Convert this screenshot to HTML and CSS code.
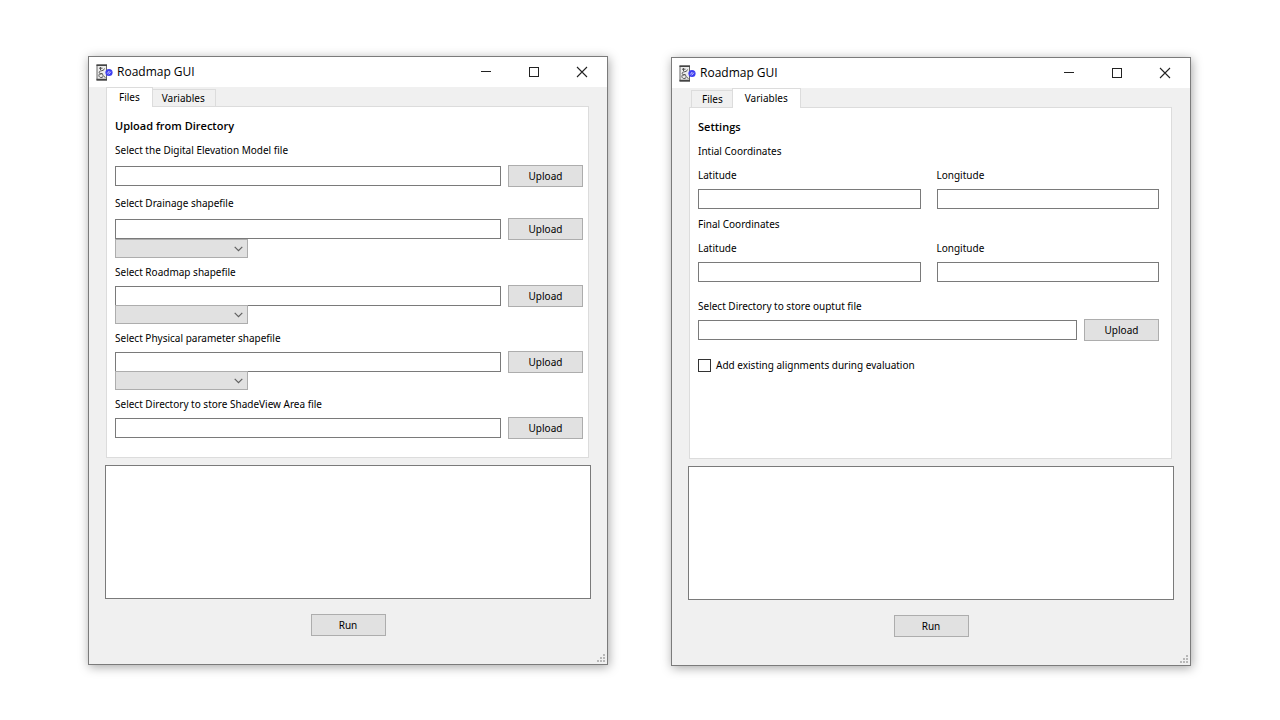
FILE: index.html
```html
<!DOCTYPE html>
<html lang="en">
<head>
<meta charset="utf-8">
<title>Roadmap GUI</title>
<link rel="stylesheet" href="styles.css">
</head>
<body>
<svg class="sprite" aria-hidden="true">
  <symbol id="app" viewBox="0 0 17 17">
    <rect x="1" y="1" width="9.5" height="15" fill="#ececec" stroke="#666" stroke-width="1"/>
    <path d="M0.5 1.2h10.5M0.5 15.6h10.5" stroke="#444" stroke-width="1.6" fill="none"/>
    <path d="M3 4.2h3.5M4.5 3v3M8.5 4.5c-.5 2-2 2-4 2.5s-1.800 2.500.5 2.500h1.500M4 9.500c-2 1.500-1 4 1 4s2.500-1 2-2.500-2-1.500-3-.5M8 12.500l1.500 1" stroke="#555" stroke-width="1" fill="none"/>
    <circle cx="13" cy="8.500" r="3.600" fill="#3d3df0"/>
    <path d="M11.300 9.500l2-2.500M12.600 10.300l2.200-2.600" stroke="#d5d5ff" stroke-width="1" fill="none"/>
  </symbol>
  <symbol id="min" viewBox="0 0 12 12"><path d="M1 5.500h10" stroke="#222" fill="none"/></symbol>
  <symbol id="max" viewBox="0 0 12 12"><rect x="1.500" y="1.500" width="9" height="9" stroke="#222" fill="none"/></symbol>
  <symbol id="close" viewBox="0 0 12 12"><path d="M1 1l10 10M11 1L1 11" stroke="#222" stroke-width="1.100" fill="none"/></symbol>
  <symbol id="chevron" viewBox="0 0 9 6"><path d="M.700 .800l3.800 3.800L8.300 .800" stroke="#606060" stroke-width="1.200" fill="none"/></symbol>
  <symbol id="grip" viewBox="0 0 9 9"><path d="M6 0h2v2h-2zM3 3h2v2h-2zM6 3h2v2h-2zM0 6h2v2h-2zM3 6h2v2h-2zM6 6h2v2h-2z" fill="#b8b8b8"/></symbol>
</svg>
<main class="desktop">
  <section class="window" aria-label="Roadmap GUI, Files">
    <header class="titlebar">
      <svg class="app-icon"><use href="#app"/></svg>
      <h1 class="title">Roadmap GUI</h1>
      <button class="control" aria-label="Minimize"><svg><use href="#min"/></svg></button>
      <button class="control" aria-label="Maximize"><svg><use href="#max"/></svg></button>
      <button class="control" aria-label="Close"><svg><use href="#close"/></svg></button>
    </header>
    <div class="body">
      <div class="tabs" role="tablist">
        <button class="tab selected" role="tab" aria-selected="true">Files</button>
        <button class="tab" role="tab" aria-selected="false">Variables</button>
      </div>
      <div class="panel" role="tabpanel">
        <h2 class="heading">Upload from Directory</h2>
        <div class="group">
          <label class="label" for="dem">Select the Digital Elevation Model file</label>
          <div class="row"><input class="field" type="text" id="dem"><button class="button">Upload</button></div>
        </div>
        <div class="group">
          <label class="label" for="drainage">Select Drainage shapefile</label>
          <div class="row"><input class="field" type="text" id="drainage"><button class="button">Upload</button></div>
          <div class="combo"><select class="select" aria-label="Drainage attribute"></select><svg class="chevron"><use href="#chevron"/></svg></div>
        </div>
        <div class="group tight">
          <label class="label" for="roadmap">Select Roadmap shapefile</label>
          <div class="row"><input class="field" type="text" id="roadmap"><button class="button">Upload</button></div>
          <div class="combo"><select class="select" aria-label="Roadmap attribute"></select><svg class="chevron"><use href="#chevron"/></svg></div>
        </div>
        <div class="group tight">
          <label class="label" for="physical">Select Physical parameter shapefile</label>
          <div class="row"><input class="field" type="text" id="physical"><button class="button">Upload</button></div>
          <div class="combo"><select class="select" aria-label="Physical parameter attribute"></select><svg class="chevron"><use href="#chevron"/></svg></div>
        </div>
        <div class="group tight">
          <label class="label" for="shade">Select Directory to store ShadeView Area file</label>
          <div class="row"><input class="field" type="text" id="shade"><button class="button">Upload</button></div>
        </div>
      </div>
      <textarea class="log" aria-label="Output log" readonly></textarea>
      <button class="button run">Run</button>
    </div>
    <svg class="grip"><use href="#grip"/></svg>
  </section>

  <section class="window lower" aria-label="Roadmap GUI, Variables">
    <header class="titlebar">
      <svg class="app-icon"><use href="#app"/></svg>
      <h1 class="title">Roadmap GUI</h1>
      <button class="control" aria-label="Minimize"><svg><use href="#min"/></svg></button>
      <button class="control" aria-label="Maximize"><svg><use href="#max"/></svg></button>
      <button class="control" aria-label="Close"><svg><use href="#close"/></svg></button>
    </header>
    <div class="body">
      <div class="tabs" role="tablist">
        <button class="tab" role="tab" aria-selected="false">Files</button>
        <button class="tab selected" role="tab" aria-selected="true">Variables</button>
      </div>
      <div class="panel settings" role="tabpanel">
        <h2 class="heading">Settings</h2>
        <p class="label group">Intial Coordinates</p>
        <div class="coords">
          <div class="coord"><label class="label" for="lat1">Latitude</label><input class="field" type="text" id="lat1"></div>
          <div class="coord"><label class="label" for="lon1">Longitude</label><input class="field" type="text" id="lon1"></div>
        </div>
        <p class="label final">Final Coordinates</p>
        <div class="coords">
          <div class="coord"><label class="label" for="lat2">Latitude</label><input class="field" type="text" id="lat2"></div>
          <div class="coord"><label class="label" for="lon2">Longitude</label><input class="field" type="text" id="lon2"></div>
        </div>
        <div class="output">
          <label class="label" for="out">Select Directory to store ouptut file</label>
          <div class="row"><input class="field" type="text" id="out"><button class="button">Upload</button></div>
        </div>
        <div class="check">
          <input class="checkbox" type="checkbox" id="existing">
          <label class="label" for="existing">Add existing alignments during evaluation</label>
        </div>
      </div>
      <textarea class="log" aria-label="Output log" readonly></textarea>
      <button class="button run">Run</button>
    </div>
    <svg class="grip"><use href="#grip"/></svg>
  </section>
</main>
</body>
</html>
```
FILE: styles.css
```css
* {
  box-sizing: border-box;
}

body {
  margin: 0;
  background: #fff;
  color: #000;
  font: 10px/16px "Noto Sans", "Open Sans", sans-serif;
}

button,
input,
select,
textarea {
  margin: 0;
  font: inherit;
  color: inherit;
  border-radius: 0;
}

.sprite {
  position: absolute;
  width: 0;
  height: 0;
}

.desktop {
  display: flex;
  align-items: flex-start;
  gap: 63px;
  padding: 56px 89px 48px 88px;
}

.window {
  position: relative;
  flex: 1;
  min-width: 0;
  background: #f0f0f0;
  border: 1px solid #7b7b7b;
  box-shadow: 1px 2px 10px rgba(0, 0, 0, 0.35);
}

.lower {
  margin-top: 1px;
}

.titlebar {
  display: flex;
  align-items: center;
  height: 30px;
  padding: 0 1px 0 7px;
  background: #fff;
}

.app-icon {
  width: 17px;
  height: 17px;
}

.title {
  flex: 1;
  margin: 0 0 0 4px;
  font: 400 12px/16px "Open Sans", "Noto Sans", sans-serif;
}

.control {
  display: flex;
  align-items: center;
  justify-content: center;
  width: 48px;
  height: 30px;
  padding: 0;
  border: 0;
  background: none;
}

.control svg {
  width: 12px;
  height: 12px;
}

.body {
  display: flex;
  flex-direction: column;
  padding: 0 16px 28px;
}

.tabs {
  display: flex;
  align-items: flex-end;
  height: 19px;
  padding-left: 3px;
}

.tab {
  height: 17px;
  padding: 0 10px;
  border: 1px solid #dcdcdc;
  border-bottom: 0;
  background: #f0f0f0;
  line-height: 16px;
}

.tab.selected {
  position: relative;
  height: 20px;
  margin: 0 -2px -1px;
  padding: 0 12px 1px;
  background: #fff;
}

.panel {
  min-height: 352px;
  margin: 0 2px 0 1px;
  padding: 11px 5px 11px 8px;
  border: 1px solid #dcdcdc;
  background: #fff;
}

.settings {
  padding-right: 12px;
}

.heading {
  margin: 0;
  font: 600 11px/16px "Open Sans", sans-serif;
}

.label {
  display: block;
  margin: 0;
}

.group {
  margin-top: 8px;
}

.tight {
  margin-top: 6px;
}

.row {
  display: flex;
  align-items: center;
  gap: 7px;
  margin-top: 7px;
}

.tight .row {
  margin-top: 5px;
}

.field {
  display: block;
  flex: 1;
  width: 100%;
  min-width: 0;
  height: 20px;
  padding: 0 3px;
  border: 1px solid #7a7a7a;
  background: #fff;
}

.button {
  width: 75px;
  height: 22px;
  padding: 0;
  border: 1px solid #adadad;
  background: #e1e1e1;
}

.combo {
  position: relative;
  width: 133px;
  margin-top: -1px;
}

.tight .combo {
  margin-top: -2px;
}

.select {
  display: block;
  width: 100%;
  height: 19px;
  appearance: none;
  border: 1px solid #adadad;
  background: #e1e1e1;
}

.chevron {
  position: absolute;
  top: 7px;
  right: 5px;
  width: 9px;
  height: 6px;
  pointer-events: none;
}

.coords {
  display: grid;
  grid-template-columns: 1fr 1fr;
  gap: 16px;
  margin-top: 8px;
}

.coord .field {
  margin-top: 6px;
}

.final {
  margin-top: 7px;
}

.output {
  margin-top: 16px;
}

.output .row {
  margin-top: 5px;
}

.check {
  display: flex;
  align-items: center;
  gap: 5px;
  margin-top: 16px;
}

.checkbox {
  width: 13px;
  height: 13px;
  appearance: none;
  border: 1px solid #333;
  background: #fff;
}

.log {
  height: 134px;
  margin-top: 7px;
  padding: 4px;
  border: 1px solid #7a7a7a;
  background: #fff;
  resize: none;
}

.run {
  align-self: center;
  margin-top: 15px;
}

.grip {
  position: absolute;
  right: 1px;
  bottom: 1px;
  width: 9px;
  height: 9px;
}
```
